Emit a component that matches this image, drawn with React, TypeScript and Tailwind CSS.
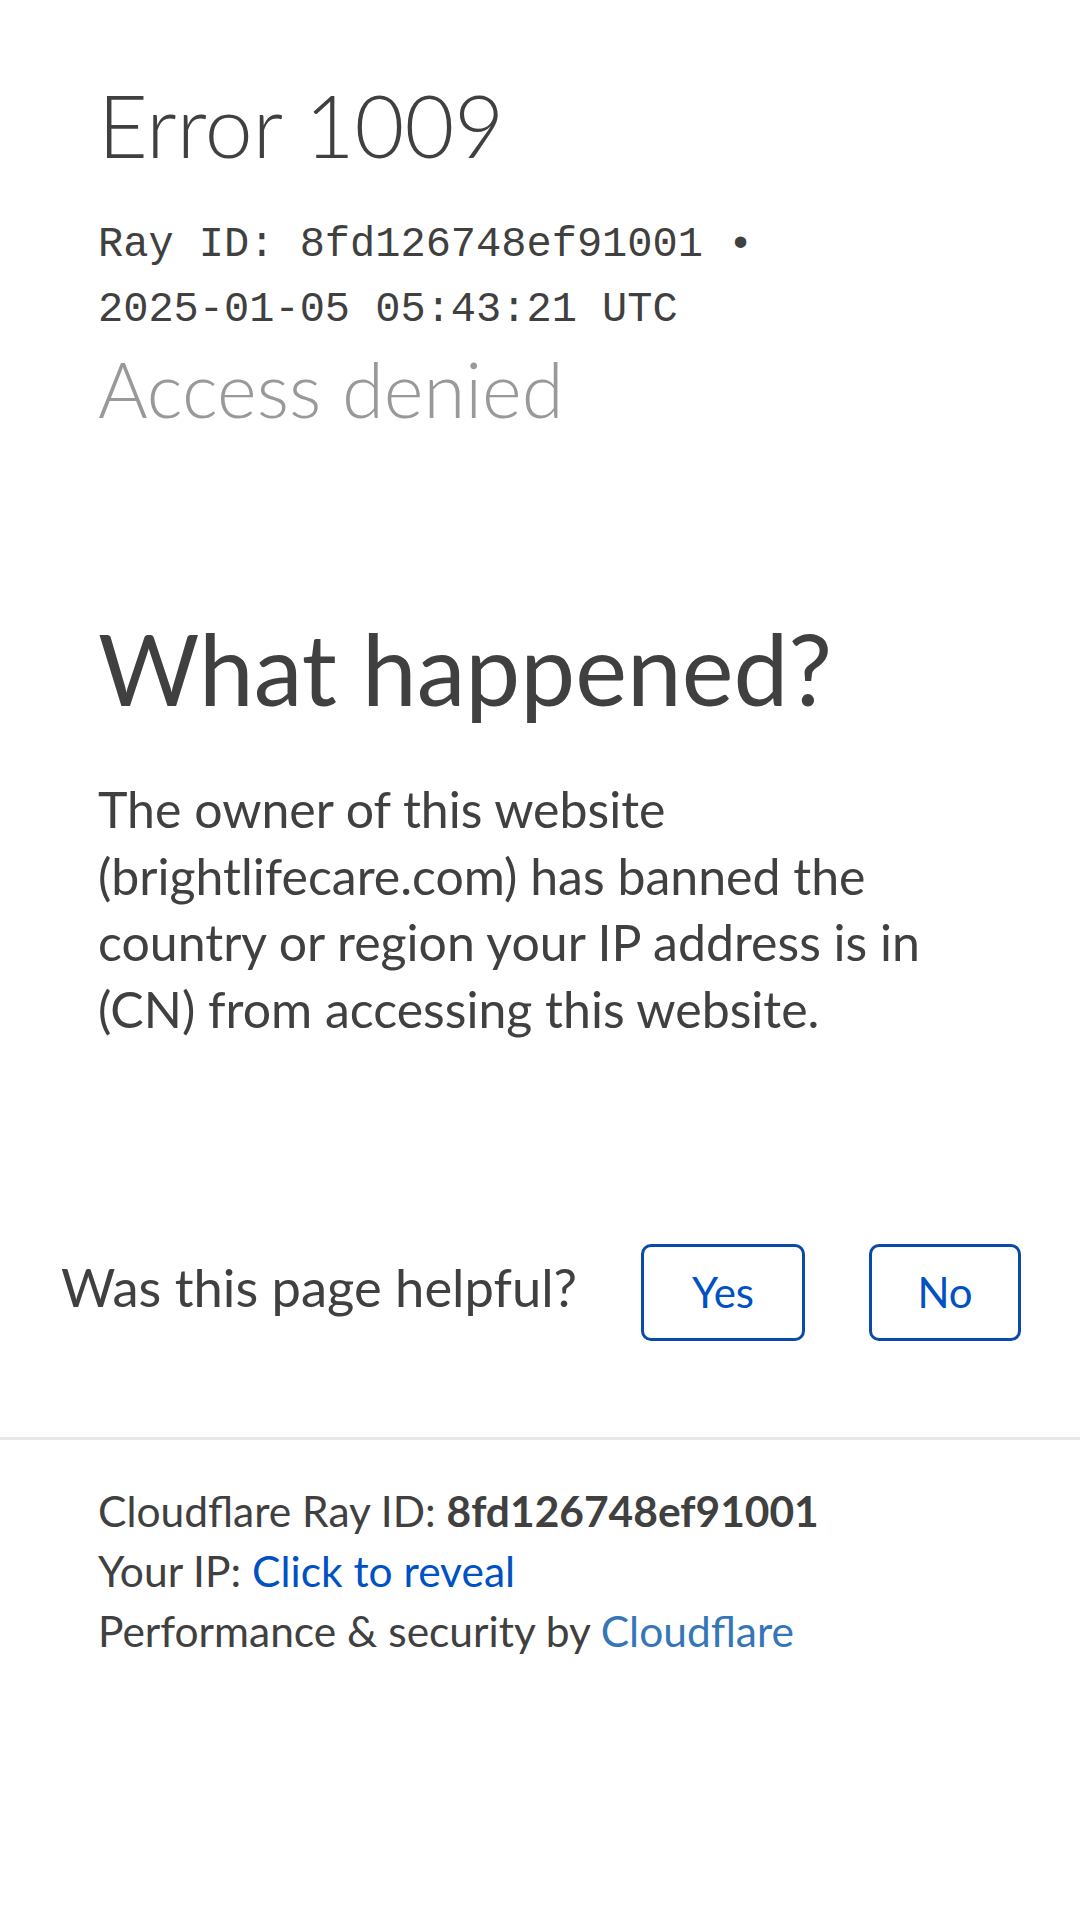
import React from "react";

const rayId = "8fd126748ef91001";

const FeedbackButton: React.FC<{ label: string; width: string }> = ({ label, width }) => (
    <button
        type="button"
        className={`${width} h-[97px] rounded-[10px] border-[3px] border-[#0a4aa8] bg-white text-[42px] leading-none text-[#0051c3]`}
    >
        {label}
    </button>
);

export default function App() {
    return (
        <div className="min-h-[1920px] bg-white text-[#404040] font-['Lato',sans-serif]">
            <header className="px-[98px] pt-[63px]">
                <h1 className="text-[86px] leading-[124px] font-light">Error 1009</h1>
                <div className="mt-[26px] font-['Liberation_Mono',monospace] text-[42px] leading-[65px]">
                    <div>Ray ID: {rayId} •</div>
                    <div>2025-01-05 05:43:21 UTC</div>
                </div>
                <h2 className="text-[76px] leading-[92px] font-light text-[#999999]">Access denied</h2>
            </header>

            <section className="px-[98px] mt-[170px]">
                <h2 className="text-[98px] leading-[126px]">What happened?</h2>
                <p className="mt-[45px] text-[50px] leading-[66.7px] whitespace-nowrap">
                    The owner of this website
                    <br />
                    (brightlifecare.com) has banned the
                    <br />
                    country or region your IP address is in
                    <br />
                    (CN) from accessing this website.
                </p>
            </section>

            <div className="mt-[201px] flex items-start px-[61px]">
                <span className="mt-[8px] text-[52.5px] leading-[70px] whitespace-nowrap">Was this page helpful?</span>
                <div className="ml-[64px] flex gap-[64px]">
                    <FeedbackButton label="Yes" width="w-[164px]" />
                    <FeedbackButton label="No" width="w-[152px]" />
                </div>
            </div>

            <div className="mt-[96px] h-[3px] bg-[#e8e8e8]" />

            <footer className="mt-[41px] px-[98px] text-[42.5px] leading-[60px]">
                <div>
                    Cloudflare Ray ID: <span className="font-bold">{rayId}</span>
                </div>
                <div>
                    Your IP: <span className="text-[#0051c3]">Click to reveal</span>
                </div>
                <div>
                    Performance &amp; security by <span className="text-[#3576b9]">Cloudflare</span>
                </div>
            </footer>
        </div>
    );
}
